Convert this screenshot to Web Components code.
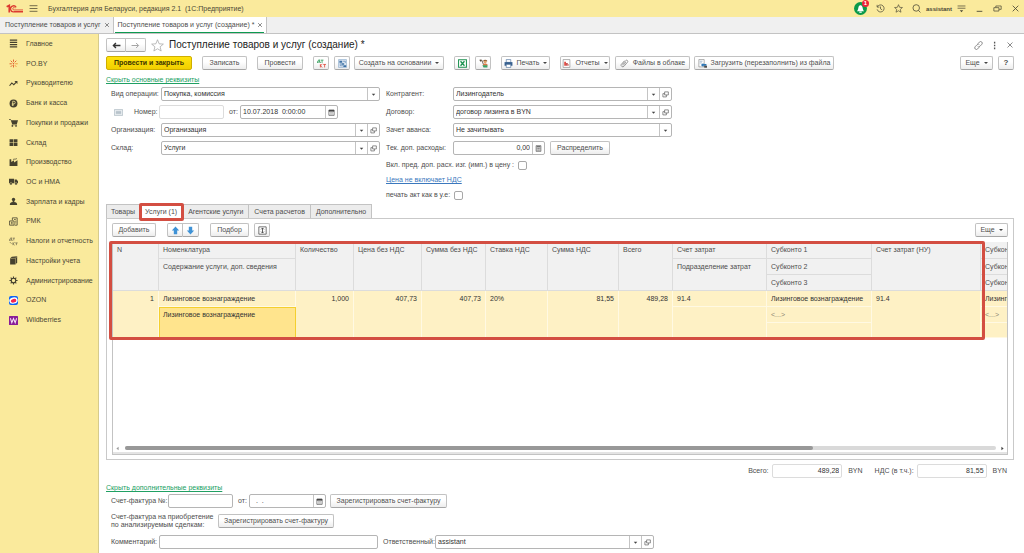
<!DOCTYPE html>
<html lang="ru">
<head>
<meta charset="utf-8">
<title>Поступление товаров и услуг (создание)</title>
<style>
    body {
        margin: 0;
        min-height: 100vh;
        display: flex;
        flex-direction: column;
        background: #fff;
        color: #4d4d4d;
        font: 7px/10px "Liberation Sans", Arial, sans-serif;
        overflow: hidden;
    }

    .workspace {
        flex: 1;
        display: flex;
    }

    side-menu {
        width: 99px;
        flex: none;
    }

    receipt-document {
        flex: 1;
        min-width: 0;
    }
</style>
</head>
<body>
<title-bar heading="Бухгалтерия для Беларуси, редакция 2.1  (1С:Предприятие)" user="assistant"></title-bar>
<window-tabs>
    <window-tab>Поступление товаров и услуг</window-tab>
    <window-tab active>Поступление товаров и услуг (создание) *</window-tab>
</window-tabs>
<div class="workspace">
    <side-menu>
        <side-item icon="lines">Главное</side-item>
        <side-item icon="spark">PO.BY</side-item>
        <side-item icon="trend">Руководителю</side-item>
        <side-item icon="coin">Банк и касса</side-item>
        <side-item icon="cart">Покупки и продажи</side-item>
        <side-item icon="boxes">Склад</side-item>
        <side-item icon="factory">Производство</side-item>
        <side-item icon="truck">ОС и НМА</side-item>
        <side-item icon="person">Зарплата и кадры</side-item>
        <side-item icon="register">РМК</side-item>
        <side-item icon="dtktgray">Налоги и отчетность</side-item>
        <side-item icon="books">Настройки учета</side-item>
        <side-item icon="gear">Администрирование</side-item>
        <side-item icon="ozon">OZON</side-item>
        <side-item icon="wb">Wildberries</side-item>
    </side-menu>
    <receipt-document></receipt-document>
</div>

<script>
const ICONS = {
    logo: `<g fill="none" stroke="#dc3a30"><path d="M1 5.500 5 3.300V14" stroke-width="2.600"/><path d="M15.500 6.300A4.600 4.600 0 1 0 12.500 13H26" stroke-width="2"/><path d="M13.800 7.600A1.800 1.800 0 1 0 12.500 10.200H26" stroke-width="1.300"/></g>`,
    burger: `<path d="M1 3h14M1 8h14M1 13h14" stroke="#5d573d" stroke-width="1.500"/>`,
    bell: `<circle cx="8" cy="8" r="8" fill="#0b9a4a"/><path d="M3.500 11.500c1.500-1 1.500-3 2-5C6 4.500 7 4 8 4s2 .5 2.500 2.500c.5 2 .5 4 2 5z" fill="#fff"/><path d="M6.500 12.500h3" stroke="#fff" stroke-width="1.500"/>`,
    history: `<g fill="none" stroke="#4a4736" stroke-width="1.3"><path d="M2.500 5A6.300 6.300 0 1 1 2 9.500M2 1.500v4h4M8 4.500V8.500l3 2"/></g>`,
    star: `<path d="m8 1.200 2 4.700 5 .4-3.800 3.300 1.200 5L8 12l-4.400 2.600 1.200-5L1 6.300l5-.4z" fill="none" stroke="#4a4736" stroke-width="1.200"/>`,
    starlight: `<path d="m8 .9 2 5 5.200.4-4 3.300 1.300 5.200L8 12l-4.500 2.800 1.300-5.200-4-3.300L6 5.900z" fill="#fff" stroke="#a3a3a3" stroke-width=".9"/>`,
    search: `<g fill="none" stroke="#4a4736" stroke-width="1.400"><circle cx="7.500" cy="7" r="5.800"/><path d="m11.500 11.500 3.500 3.500"/></g>`,
    settings: `<path d="M1 3.500h14M1 7.500h14" stroke="#4a4736" stroke-width="1.300"/><path d="M5 11h6l-3 3.500z" fill="#4a4736"/>`,
    minimize: `<path d="M3 13h10" stroke="#4a4736" stroke-width="1.600"/>`,
    restore: `<g fill="none" stroke="#4a4736" stroke-width="1.300"><path d="M1.500 6.500h9v6h-9zM5 6V3.500h9.500v6H11"/></g>`,
    close: `<path d="m3 3 10 10M13 3 3 13" stroke="currentColor" stroke-width="1.500"/>`,
    link: `<g fill="none" stroke="#666" stroke-width="1.300"><path d="M7 4.500 9.500 2a2.800 2.800 0 0 1 4.500 3.800L10.500 9.500a2.500 2.500 0 0 1-4 0M9 11.500 6.500 14A2.800 2.800 0 0 1 2 10.200L5.500 6.500a2.500 2.500 0 0 1 4 0"/></g>`,
    dots: `<path d="M7 1.500h2.400v3H7zM7 6.500h2.400v3H7zM7 11.500h2.400v3H7z" fill="#555"/>`,
    back: `<path d="M15 8H3M7 3.500 2.500 8 7 12.500" fill="none" stroke="#333" stroke-width="2.400"/>`,
    forward: `<path d="M1 8h12M9 3.500 13.500 8 9 12.500" fill="none" stroke="#9b9b9b" stroke-width="1.600"/>`,

    lines: `<path d="M1.500 2h13M1.500 6h13M1.500 10h13M1.500 14h13" stroke="#45412f" stroke-width="2"/>`,
    spark: `<g stroke="#e0602c" stroke-width="1.700"><path d="M8 1v4M3 3l3 3M1 8.500h4M3 14l3-3M8 11v4M13 3l-3 3"/></g><path d="M11 8.500h4.500M10.500 11l2.500 3" stroke="#ef8c2d" stroke-width="1.500"/><circle cx="8" cy="8.300" r="1.300" fill="#e0502c"/>`,
    trend: `<path d="m1 12 4-5 3.500 3L13 5.500" fill="none" stroke="#45412f" stroke-width="2"/><path d="M9.500 3.500H15V9z" fill="#45412f"/>`,
    coin: `<circle cx="8" cy="8" r="7" fill="#45412f"/><path d="M6.500 12.500V4h2.300a2.300 2.300 0 0 1 0 4.600H5M5 10.500h4" fill="none" stroke="#faea9c" stroke-width="1.300"/>`,
    cart: `<path d="M0 2h3l1 2h12l-2 6.500H5.500L3 3.500H0z" fill="#45412f"/><path d="M5 12h9" stroke="#45412f" stroke-width="1.300"/><circle cx="6" cy="14" r="1.500" fill="#45412f"/><circle cx="12.500" cy="14" r="1.500" fill="#45412f"/>`,
    boxes: `<path d="M1 2h6.500v5.500H1zM8.500 2H15v5.500H8.500zM1 8.500h6.500V14H1zM8.500 8.500H15V14H8.500z" fill="#45412f"/>`,
    factory: `<path d="M1 14V2h3v5l5-3v4l6-4v10z" fill="#45412f"/><path d="M7 3c2-2 4 0 7-2" fill="none" stroke="#45412f" stroke-width="1.300"/>`,
    truck: `<path d="M0 3h9v8H0zM10 4.500h3.500L16 7.500V11h-6z" fill="#45412f"/><g fill="#45412f" stroke="#faea9c" stroke-width=".7"><circle cx="3.500" cy="12" r="2.200"/><circle cx="12.500" cy="12" r="2.200"/></g>`,
    person: `<circle cx="8" cy="4.500" r="3" fill="#45412f"/><path d="M6.500 7h3v2c3 .5 5 1.500 5 5h-13c0-3.500 2-4.500 5-5z" fill="#45412f"/>`,
    register: `<g fill="none" stroke="#45412f" stroke-width="1.400"><path d="M1 7h8v7.500H1zM6 6V1.500h8.500v13H10M3.500 9.500h3M3.500 12h3M9 4.500h3M11 7.500h2M11 10.500h2"/></g>`,
    dtktgray: `<g fill="none" stroke="#6b664c" stroke-width="1.200"><path d="M1 6.500V5.500L3 1.500h1.500v4M0 5.500h6v1M6.500 2h4M8.500 2v4M7 9.500v5M7 12l3-2.500M7 12l3 2.500M11 10.500h4.500M13.200 10.500v4M1.500 9l3 3"/></g>`,
    books: `<path d="m5 1.500 9.500-1v11l-3 3.500H2V4z" fill="#45412f"/><path d="m2.500 4.500 9-.5 2.500-3M11.500 4v11" fill="none" stroke="#faea9c" stroke-width=".7"/>`,
    gear: `<circle cx="8" cy="8" r="4" fill="none" stroke="#45412f" stroke-width="2"/><path d="M8 .8v3M8 12.200v3M.8 8h3M12.200 8h3M3 3l2 2M11 11l2 2M3 13l2-2M11 5l2-2" stroke="#45412f" stroke-width="2"/>`,
    ozon: `<rect width="16" height="16" rx="3.500" fill="#0b62f5"/><ellipse cx="8" cy="8" rx="7.500" ry="5.500" fill="#fff" transform="rotate(-12 8 8)"/><ellipse cx="8" cy="8.500" rx="5" ry="3.200" fill="#f4234f" transform="rotate(-12 8 8)"/>`,
    wb: `<rect width="16" height="16" rx="1" fill="#8a1d98"/><path d="m2.500 4 2.500 8 3-7.500L11 12l2.500-8" fill="none" stroke="#f6e3f8" stroke-width="1.800"/>`,

    dtkt: `<g fill="none" stroke-width="1.400"><path stroke="#2b9a55" d="M1 7V5.500L3 1.500h1.500v4M0 5.500h6V7M6.500 2h5M9 2v5"/><path stroke="#dc4334" d="M6 9v6M6 12l3.500-3M6 12l3.500 3M11 9.700h5M13.500 9.700V15"/></g>`,
    structure: `<path d="M1 1h14v14H1z" fill="#dfe9f3" stroke="#7ba0c4"/><path d="M2.500 3h5v3.500h-5zM6 7.500h5V10H6zM9.500 11h5v3h-5z" fill="#3e71a5"/><path d="M4 7v5h5M9 4h4v3" fill="none" stroke="#3e71a5"/>`,
    excel: `<path d="M1 1.500h14v13H1z" fill="#fff" stroke="#1c9150" stroke-width="1.800"/><path d="m4.500 4 7 8M11.500 4l-7 8" stroke="#1c9150" stroke-width="2.400"/>`,
    cargo: `<path d="M1 2h4l3 8" fill="none" stroke="#5a4a3a" stroke-width="1.500"/><path d="M7 3.500c2-3 6-3 8 0l-1 1H8z" fill="#8a5a32"/><circle cx="11" cy="5.500" r="2.500" fill="#e0a468"/><path d="M7 9.500c2-2 6-2 8 0V12H7z" fill="#d9784a"/><path d="M6 11h9v4H8z" fill="#39a267"/><circle cx="3" cy="3" r="1.500" fill="#5a4a3a"/>`,
    printer: `<path d="M4 1h8v5H4z" fill="#fff" stroke="#38618f"/><path d="M1 5.500h14V12H1z" fill="#38618f"/><path d="M4 9.500h8V15H4z" fill="#fff" stroke="#38618f"/>`,
    report: `<path d="M2 1h12v14H2z" fill="#fff" stroke="#8c8c8c" stroke-width="1.200"/><path d="M4 5h3v7H4z" fill="#df4239"/><path d="M7.500 7H10v5H7.500z" fill="#b22a2a"/><path d="M10.500 9h2v3h-2z" fill="#e69a94"/>`,
    clip: `<path d="m4 10 6-7a2 2 0 0 1 3.500 2.500L7 13a3 3 0 0 1-5-3l6-7M5.500 11.500l5-6" fill="none" stroke="#777" stroke-width="1.300"/>`,
    load: `<path d="M1.500 1H11v13H1.500z" fill="#fff" stroke="#777"/><path d="M3 4h5M3 7h4" stroke="#8aa7c4" stroke-width="1.300"/><path d="M9.500 7 5 10.500 9.500 14v-2H15V9H9.500z" fill="#2f78b7"/><path d="M11 12h5v3.500h-5z" fill="#4c4c4c"/>`,
    card: `<path d="M.5 3h15v10H.5z" fill="#f5f8fa" stroke="#8799a6"/><path d="M3 6h10M3 8h10M3 10h10" stroke="#8799a6"/>`,
    up: `<path d="m8 1 6.500 7H11v6.500H5V8H1.500z" fill="#3e92d6"/>`,
    down: `<path d="m8 15 6.500-7H11V1.500H5V8H1.500z" fill="#3e92d6"/>`,
    fit: `<path d="M1.500 1.500h13v13h-13z" fill="#fff" stroke="#444" stroke-width="1.300"/><path d="M8 4v8M5.500 6 8 3.500 10.500 6M5.500 10 8 12.500l2.500-2.500" fill="none" stroke="#333" stroke-width="1.400"/>`,
    drop: `<path d="M4 6h8l-4 5z" fill="#444"/>`,
    open: `<g fill="none" stroke="#555" stroke-width="1.500"><path d="M6 2h8.500v7H6z"/><path d="M6 6H2v7.500h8V9"/></g>`,
    date: `<path d="M2 2.500h12v12H2z" fill="#fff" stroke="#444" stroke-width="1.500"/><path d="M2 2h12v4H2z" fill="#444"/><path d="M4.500 8.500h7M4.500 11.500h7" stroke="#777" stroke-width="1.300"/>`,
    calc: `<path d="M2.500 1.500h11v13h-11z" fill="#ddd" stroke="#444" stroke-width="1.300"/><path d="M4 4h8" stroke="#444" stroke-width="2"/><path d="M4 8h8M4 11.500h8" stroke="#555" stroke-width="1.500" stroke-dasharray="2 1"/>`,
    left: `<path d="M10 5v6L6 8z" fill="#999"/>`,
    right: `<path d="M6 5v6l4-3z" fill="#444"/>`
};

function render(host, html) {
    const template = document.createElement("template");
    template.innerHTML = html;
    host.attachShadow({ mode: "open" }).appendChild(template.content.cloneNode(true));
}

class UiIcon extends HTMLElement {
    constructor() {
        super();
        this.attachShadow({ mode: "open" });
    }

    connectedCallback() {
        const name = this.getAttribute("name");
        const box = name === "logo" ? "0 0 26 16" : "0 0 16 16";
        this.shadowRoot.innerHTML = `
        <style>
            :host { display: inline-block; width: 9px; height: 9px; flex: none; }
            svg { display: block; width: 100%; height: 100%; }
        </style>
        <svg viewBox="${box}" aria-hidden="true">${ICONS[name] || ""}</svg>
      `;
    }
}
customElements.define("ui-icon", UiIcon);

class UiButton extends HTMLElement {
    connectedCallback() {
        if (this.shadowRoot) return;
        const icon = this.getAttribute("icon");
        render(this, `
        <style>
            :host { display: block; flex: none; }
            button {
                width: 100%;
                height: 14px;
                box-sizing: border-box;
                display: flex;
                align-items: center;
                justify-content: center;
                gap: 4px;
                padding: 0;
                border: 1px solid #c2c2c2;
                border-bottom-color: #a6a6a6;
                border-radius: 2px;
                background: linear-gradient(#fff 40%, #ededed);
                color: #4d4d4d;
                font: inherit;
                white-space: nowrap;
            }
            :host([primary]) button {
                border-color: #cfae00;
                background: linear-gradient(#ffe30d, #f1cf00);
                color: #3d3600;
                font-weight: bold;
            }
            :host([joined]) button { border-radius: 2px 0 0 2px; }
            :host([joined="end"]) button { border-radius: 0 2px 2px 0; border-left: 0; }
            .caret {
                border: 2px solid transparent;
                border-top-color: #444;
                border-bottom: 0;
            }
        </style>
        <button type="button" aria-label="${this.getAttribute("hint") || this.textContent}">
            ${icon ? `<ui-icon name="${icon}"></ui-icon>` : ""}
            ${this.textContent ? "<slot></slot>" : ""}
            ${this.hasAttribute("menu") ? `<span class="caret"></span>` : ""}
        </button>
      `);
    }
}
customElements.define("ui-button", UiButton);

class UiField extends HTMLElement {
    connectedCallback() {
        if (this.shadowRoot) return;
        const label = this.getAttribute("label");
        const value = this.getAttribute("value") || "";
        const tools = (this.getAttribute("tools") || "").split(" ").filter(Boolean);
        const names = { drop: "Выбрать", open: "Открыть", date: "Календарь", calc: "Калькулятор" };
        render(this, `
        <style>
            :host { display: flex; align-items: center; min-width: 0; }
            label { width: var(--label-width, auto); flex: none; white-space: nowrap; }
            .box {
                flex: 1;
                min-width: 0;
                height: 14px;
                box-sizing: border-box;
                display: flex;
                border: 1px solid #b5b5b5;
                border-radius: 2px;
                background: #fff;
            }
            :host([quiet]) .box { border-color: #dcdcdc; }
            input {
                flex: 1;
                width: 0;
                min-width: 0;
                padding: 0 2px;
                border: 0;
                outline: 0;
                background: none;
                color: #333;
                font: inherit;
            }
            :host([number]) input { text-align: right; }
            button {
                width: 12px;
                padding: 0;
                border: 0;
                border-left: 1px solid #c4c4c4;
                background: none;
                display: flex;
                align-items: center;
                justify-content: center;
            }
            ui-icon { width: 7px; height: 7px; }
        </style>
        <label for="input">${label}</label>
        <div class="box">
            <input id="input" type="text" value="${value}" ${this.hasAttribute("quiet") ? "readonly" : ""}>
            ${tools.map(t => `<button type="button" aria-label="${names[t]}"><ui-icon name="${t}"></ui-icon></button>`).join("")}
        </div>
      `);
    }
}
customElements.define("ui-field", UiField);

class UiCheck extends HTMLElement {
    connectedCallback() {
        if (this.shadowRoot) return;
        render(this, `
        <style>
            :host { display: flex; align-items: center; height: 10px; }
            label { display: flex; align-items: center; gap: 4px; white-space: nowrap; }
            input {
                appearance: none;
                width: 9px;
                height: 9px;
                margin: 0;
                border: 1px solid #a8a8a8;
                border-radius: 2px;
                background: #fff;
            }
        </style>
        <label><slot></slot><input type="checkbox"></label>
      `);
    }
}
customElements.define("ui-check", UiCheck);

class TitleBar extends HTMLElement {
    connectedCallback() {
        if (this.shadowRoot) return;
        render(this, `
        <style>
            :host {
                display: flex;
                align-items: center;
                height: 17px;
                padding: 0 4px 0 6px;
                background: #faea9c;
                color: #4a4736;
            }
            .logo { width: 17px; height: 11px; }
            .burger { margin: 0 10px 0 6px; }
            h1 { flex: 1; margin: 0; font: inherit; white-space: pre; }
            nav { display: flex; align-items: center; gap: 9px; }
            .bell { position: relative; display: flex; }
            .bell ui-icon { width: 13px; height: 13px; }
            .badge {
                position: absolute;
                top: -2px;
                right: -2px;
                width: 7px;
                height: 7px;
                border-radius: 50%;
                background: #ee2338;
                color: #fff;
                font: bold 6px/7px "Liberation Sans", Arial, sans-serif;
                text-align: center;
            }
            .user { font-size: 6px; font-weight: bold; margin: 0 -4px; }
        </style>
        <ui-icon class="logo" name="logo"></ui-icon>
        <ui-icon class="burger" name="burger"></ui-icon>
        <h1>${this.getAttribute("heading")}</h1>
        <nav>
            <span class="bell"><ui-icon name="bell"></ui-icon><span class="badge">1</span></span>
            <ui-icon name="history"></ui-icon>
            <ui-icon name="star"></ui-icon>
            <ui-icon name="search"></ui-icon>
            <span class="user">${this.getAttribute("user")}</span>
            <ui-icon name="settings"></ui-icon>
            <ui-icon name="minimize"></ui-icon>
            <ui-icon name="restore"></ui-icon>
            <ui-icon name="close"></ui-icon>
        </nav>
      `);
    }
}
customElements.define("title-bar", TitleBar);

class WindowTabs extends HTMLElement {
    connectedCallback() {
        if (this.shadowRoot) return;
        render(this, `
        <style>
            :host {
                display: flex;
                height: 16px;
                border-bottom: 1px solid #c3c3c3;
                background: #f0f0f0;
            }
        </style>
        <slot></slot>
      `);
    }
}
customElements.define("window-tabs", WindowTabs);

class WindowTab extends HTMLElement {
    connectedCallback() {
        if (this.shadowRoot) return;
        render(this, `
        <style>
            :host {
                display: flex;
                align-items: center;
                padding: 0 3px 0 5px;
                border-right: 1px solid #c3c3c3;
                white-space: nowrap;
            }
            :host([active]) { padding: 0 2px 0 1px; background: #fff; }
            :host([active]) .body { padding: 0 1px 0 3px; box-shadow: 0 -1px #0d9a50 inset; }
            .body { display: flex; align-items: center; gap: 3px; height: 15px; }
            button { display: flex; padding: 0; border: 0; background: none; color: #333; }
            ui-icon { width: 6px; height: 6px; }
        </style>
        <div class="body">
            <slot></slot>
            <button type="button" aria-label="Закрыть"><ui-icon name="close"></ui-icon></button>
        </div>
      `);
    }
}
customElements.define("window-tab", WindowTab);

class SideMenu extends HTMLElement {
    connectedCallback() {
        if (this.shadowRoot) return;
        render(this, `
        <style>
            :host {
                display: block;
                box-sizing: border-box;
                border-right: 1px solid #d6cb8c;
                background: #faea9c;
                color: #4a4736;
            }
            nav { display: grid; grid-auto-rows: 1fr; height: 296px; }
        </style>
        <nav><slot></slot></nav>
      `);
    }
}
customElements.define("side-menu", SideMenu);

class SideItem extends HTMLElement {
    connectedCallback() {
        if (this.shadowRoot) return;
        render(this, `
        <style>
            :host { display: flex; align-items: center; }
            a {
                display: flex;
                align-items: center;
                gap: 8px;
                padding-left: 9px;
                color: inherit;
                text-decoration: none;
                white-space: nowrap;
            }
        </style>
        <a href="#"><ui-icon name="${this.getAttribute("icon")}"></ui-icon><slot></slot></a>
      `);
    }
}
customElements.define("side-item", SideItem);

// Red frame drawn over whatever box contains it
class MarkFrame extends HTMLElement {
    connectedCallback() {
        if (this.shadowRoot) return;
        render(this, `
        <style>
            :host {
                display: block;
                position: absolute;
                z-index: 1;
                box-sizing: border-box;
                border: 3px solid #d34e42;
                border-radius: 2px;
                pointer-events: none;
            }
        </style>
      `);
    }
}
customElements.define("mark-frame", MarkFrame);

class ServiceGrid extends HTMLElement {
    connectedCallback() {
        if (this.shadowRoot) return;
        const widths = [46, 137, 58, 68, 64, 62, 71, 54, 94, 105, 109, 105];
        render(this, `
        <style>
            :host {
                display: flex;
                flex-direction: column;
                position: relative;
                border: 1px solid #c3c3c3;
                border-top: 0;
            }
            .scroll { flex: 1; overflow: hidden; }
            table {
                width: ${widths.reduce((a, b) => a + b)}px;
                table-layout: fixed;
                border-collapse: separate;
                border-spacing: 0;
            }
            th, td {
                box-sizing: border-box;
                height: 16px;
                padding: 3px 4px 2px;
                vertical-align: top;
                text-align: left;
                font-weight: normal;
                white-space: nowrap;
                overflow: hidden;
            }
            th {
                border-right: 1px solid #dcdcdc;
                border-bottom: 1px solid #dcdcdc;
                background: #f1f1f1;
            }
            thead tr:first-child th { height: 17px; }
            td {
                border-right: 1px solid #fff9e3;
                border-bottom: 1px solid #fff9e3;
                background: #fef1c5;
                color: #333;
                height: 15px;
            }
            .num { text-align: right; }
            .current {
                padding: 2px 3px;
                border: 1px solid #f4cf2e;
                background: #ffe48d;
            }
            .dim { color: #8d8671; }
            .bar {
                display: flex;
                align-items: center;
                height: 8px;
                border-bottom: 2px solid #e4e4e4;
            }
            .track { flex: 1; height: 4px; margin: 0 2px 0 3px; border-radius: 2px; background: #d9d9d9; }
            .thumb { width: 79%; height: 4px; border-radius: 2px; background: #989898; }
            mark-frame { left: -4px; top: -1px; width: 876px; height: 99px; }
        </style>
        <div class="scroll">
            <table>
                <colgroup>${widths.map(w => `<col style="width:${w}px">`).join("")}</colgroup>
                <thead>
                    <tr>
                        <th rowspan="3">N</th>
                        <th>Номенклатура</th>
                        <th rowspan="3">Количество</th>
                        <th rowspan="3">Цена без НДС</th>
                        <th rowspan="3">Сумма без НДС</th>
                        <th rowspan="3">Ставка НДС</th>
                        <th rowspan="3">Сумма НДС</th>
                        <th rowspan="3">Всего</th>
                        <th>Счет затрат</th>
                        <th>Субконто 1</th>
                        <th rowspan="3">Счет затрат (НУ)</th>
                        <th>Субконто 1</th>
                    </tr>
                    <tr>
                        <th rowspan="2">Содержание услуги, доп. сведения</th>
                        <th rowspan="2">Подразделение затрат</th>
                        <th>Субконто 2</th>
                        <th>Субконто 2</th>
                    </tr>
                    <tr>
                        <th>Субконто 3</th>
                        <th>Субконто 3</th>
                    </tr>
                </thead>
                <tbody>
                    <tr>
                        <td rowspan="3" class="num">1</td>
                        <td>Лизинговое вознаграждение</td>
                        <td rowspan="3" class="num">1,000</td>
                        <td rowspan="3" class="num">407,73</td>
                        <td rowspan="3" class="num">407,73</td>
                        <td rowspan="3">20%</td>
                        <td rowspan="3" class="num">81,55</td>
                        <td rowspan="3" class="num">489,28</td>
                        <td>91.4</td>
                        <td>Лизинговое вознаграждение</td>
                        <td rowspan="3">91.4</td>
                        <td>Лизинговое вознаграждение</td>
                    </tr>
                    <tr>
                        <td rowspan="2" class="current">Лизинговое вознаграждение</td>
                        <td rowspan="2"></td>
                        <td class="dim">&lt;...&gt;</td>
                        <td class="dim">&lt;...&gt;</td>
                    </tr>
                    <tr>
                        <td></td>
                        <td></td>
                    </tr>
                </tbody>
            </table>
        </div>
        <div class="bar">
            <ui-icon name="left"></ui-icon>
            <div class="track"><div class="thumb"></div></div>
            <ui-icon name="right"></ui-icon>
        </div>
        <mark-frame></mark-frame>
      `);
    }
}
customElements.define("service-grid", ServiceGrid);

class ReceiptDocument extends HTMLElement {
    connectedCallback() {
        if (this.shadowRoot) return;
        render(this, `
        <style>
            :host {
                display: flex;
                flex-direction: column;
                box-sizing: border-box;
                padding: 4px 10px 4px 7px;
            }
            .row { display: flex; align-items: center; }
            .push { margin-left: auto; }
            .head { height: 14px; }
            .head h2 { flex: 1; margin: 0 0 0 5px; color: #222; font-size: 10px; font-weight: normal; line-height: 14px; }
            .head .star { width: 13px; height: 13px; margin-left: 5px; }
            .head .tools { display: flex; gap: 7px; color: #666; }
            .tools ui-icon:last-child { width: 8px; height: 8px; }
            .arrow { width: 20px; }
            .commands { margin-top: 4px; }
            .square { width: 16px; }
            .help { font-size: 8px; font-weight: bold; }
            a { color: #20a063; }
            a.blue { color: #3b78bd; }
            .toggle { align-self: flex-start; height: 10px; }
            .form {
                display: grid;
                grid-template-columns: minmax(0, 269px) minmax(0, 286px);
                column-gap: 6px;
                margin: 2px 0 4px 5px;
            }
            .col { display: flex; flex-direction: column; gap: 4px; }
            .left { --label-width: 50px; }
            .right { --label-width: 67px; }
            .extra { display: flex; flex-direction: column; align-items: flex-start; gap: 5px; margin-top: 1px; }
            .number { flex: none; width: 90px; --label-width: 25px; }
            .date { flex: none; width: 109px; --label-width: 11px; margin-left: 5px; }
            .card { margin: 0 11px 0 3px; }
            .tabs { display: flex; }
            .tabs button {
                position: relative;
                height: 14px;
                box-sizing: border-box;
                padding: 0 5px;
                border: 1px solid #c3c3c3;
                border-width: 1px 1px 0 0;
                background: #ececec;
                color: #4d4d4d;
                font: inherit;
                white-space: nowrap;
            }
            .tabs button:first-child { padding: 0 4px; border-left-width: 1px; }
            .tabs .active { background: #fff; }
            .tabs mark-frame { inset: -2px -2px -3px -1px; }
            .panel {
                flex: 1;
                display: flex;
                flex-direction: column;
                gap: 5px;
                padding: 4px 5px;
                border: 1px solid #c9c9c9;
            }
            service-grid { flex: 1; }
            .totals { justify-content: flex-end; margin: 4px 7px 5px 0; }
            .totals span { margin-left: 6px; }
            .totals .vat { --label-width: 42px; width: 112px; margin-left: 12px; }
            .totals .sum { --label-width: 24px; width: 94px; }
            .bottom { margin-left: 5px; }
            .two { line-height: 8px; width: 107px; }
        </style>
        <div class="row head">
            <ui-button class="arrow" icon="back" hint="Назад" joined></ui-button>
            <ui-button class="arrow" icon="forward" hint="Вперед" joined="end"></ui-button>
            <ui-icon class="star" name="starlight"></ui-icon>
            <h2>Поступление товаров и услуг (создание) *</h2>
            <div class="tools">
                <ui-icon name="link"></ui-icon>
                <ui-icon name="dots"></ui-icon>
                <ui-icon name="close"></ui-icon>
            </div>
        </div>

        <div class="row commands">
            <ui-button primary style="width:86px">Провести и закрыть</ui-button>
            <ui-button style="width:45px;margin-left:10px">Записать</ui-button>
            <ui-button style="width:46px;margin-left:10px">Провести</ui-button>
            <ui-button class="square" icon="dtkt" hint="Проводки" style="margin-left:10px"></ui-button>
            <ui-button class="square" icon="structure" hint="Структура" style="margin-left:5px"></ui-button>
            <ui-button menu style="width:90px;margin-left:4px">Создать на основании</ui-button>
            <ui-button class="square" icon="excel" hint="Excel" style="margin-left:10px"></ui-button>
            <ui-button class="square" icon="cargo" hint="Груз" style="margin-left:5px"></ui-button>
            <ui-button icon="printer" menu style="width:49px;margin-left:10px">Печать</ui-button>
            <ui-button icon="report" menu style="width:50px;margin-left:10px">Отчеты</ui-button>
            <ui-button icon="clip" style="width:75px;margin-left:5px">Файлы в облаке</ui-button>
            <ui-button icon="load" style="width:140px;margin-left:4px">Загрузить (перезаполнить) из файла</ui-button>
            <ui-button class="push" menu style="width:33px">Еще</ui-button>
            <ui-button class="square help" style="margin-left:5px">?</ui-button>
        </div>

        <a class="toggle" href="#" style="margin-top:5px">Скрыть основные реквизиты</a>

        <div class="form">
            <div class="col left">
                <ui-field label="Вид операции:" value="Покупка, комиссия" tools="drop"></ui-field>
                <div class="row">
                    <ui-icon class="card" name="card"></ui-icon>
                    <ui-field class="number" label="Номер:" quiet></ui-field>
                    <ui-field class="date" label="от:" value="10.07.2018  0:00:00" tools="date"></ui-field>
                </div>
                <ui-field label="Организация:" value="Организация" tools="drop open"></ui-field>
                <ui-field label="Склад:" value="Услуги" tools="drop open"></ui-field>
            </div>
            <div class="col right">
                <ui-field label="Контрагент:" value="Лизингодатель" tools="drop open"></ui-field>
                <ui-field label="Договор:" value="договор лизинга в BYN" tools="drop open"></ui-field>
                <ui-field label="Зачет аванса:" value="Не зачитывать" tools="drop"></ui-field>
                <div class="row">
                    <ui-field label="Тек. доп. расходы:" value="0,00" number tools="calc" style="width:159px"></ui-field>
                    <ui-button style="width:60px;margin-left:5px">Распределить</ui-button>
                </div>
                <div class="extra">
                    <ui-check>Вкл. пред. доп. расх. изг. (имп.) в цену :</ui-check>
                    <a class="blue" href="#">Цена не включает НДС</a>
                    <ui-check>печать акт как в у.е:</ui-check>
                </div>
            </div>
        </div>

        <div class="tabs" role="tablist">
            <button type="button" role="tab">Товары</button>
            <button type="button" role="tab" class="active" aria-selected="true">Услуги (1)<mark-frame></mark-frame></button>
            <button type="button" role="tab">Агентские услуги</button>
            <button type="button" role="tab">Счета расчетов</button>
            <button type="button" role="tab">Дополнительно</button>
        </div>
        <div class="panel">
            <div class="row">
                <ui-button style="width:44px">Добавить</ui-button>
                <ui-button class="square" icon="up" hint="Вверх" joined style="margin-left:11px"></ui-button>
                <ui-button class="square" icon="down" hint="Вниз" joined="end"></ui-button>
                <ui-button style="width:39px;margin-left:11px">Подбор</ui-button>
                <ui-button class="square" icon="fit" hint="Высота строк" style="margin-left:5px"></ui-button>
                <ui-button class="push" menu style="width:33px">Еще</ui-button>
            </div>
            <service-grid></service-grid>
        </div>

        <div class="row totals">
            <ui-field class="sum" label="Всего:" value="489,28" number quiet></ui-field><span>BYN</span>
            <ui-field class="vat" label="НДС (в т.ч.):" value="81,55" number quiet></ui-field><span>BYN</span>
        </div>

        <a class="toggle" href="#">Скрыть дополнительные реквизиты</a>

        <div class="row bottom" style="margin-top:1px">
            <ui-field label="Счет-фактура №:" style="width:122px;--label-width:57px"></ui-field>
            <ui-field label="от:" value="  .  ." tools="date" style="width:88px;margin-left:5px;--label-width:11px"></ui-field>
            <ui-button style="width:117px;margin-left:4px">Зарегистрировать счет-фактуру</ui-button>
        </div>
        <div class="row bottom" style="margin-top:5px">
            <span class="two">Счет-фактура на приобретение<br>по анализируемым сделкам:</span>
            <ui-button style="width:116px">Зарегистрировать счет-фактуру</ui-button>
        </div>
        <div class="row bottom" style="margin-top:6px">
            <ui-field label="Комментарий:" style="width:267px;--label-width:48px"></ui-field>
            <ui-field label="Ответственный:" value="assistant" tools="drop open" style="width:271px;margin-left:5px;--label-width:52px"></ui-field>
        </div>
      `);
    }
}
customElements.define("receipt-document", ReceiptDocument);
</script>
</body>
</html>
